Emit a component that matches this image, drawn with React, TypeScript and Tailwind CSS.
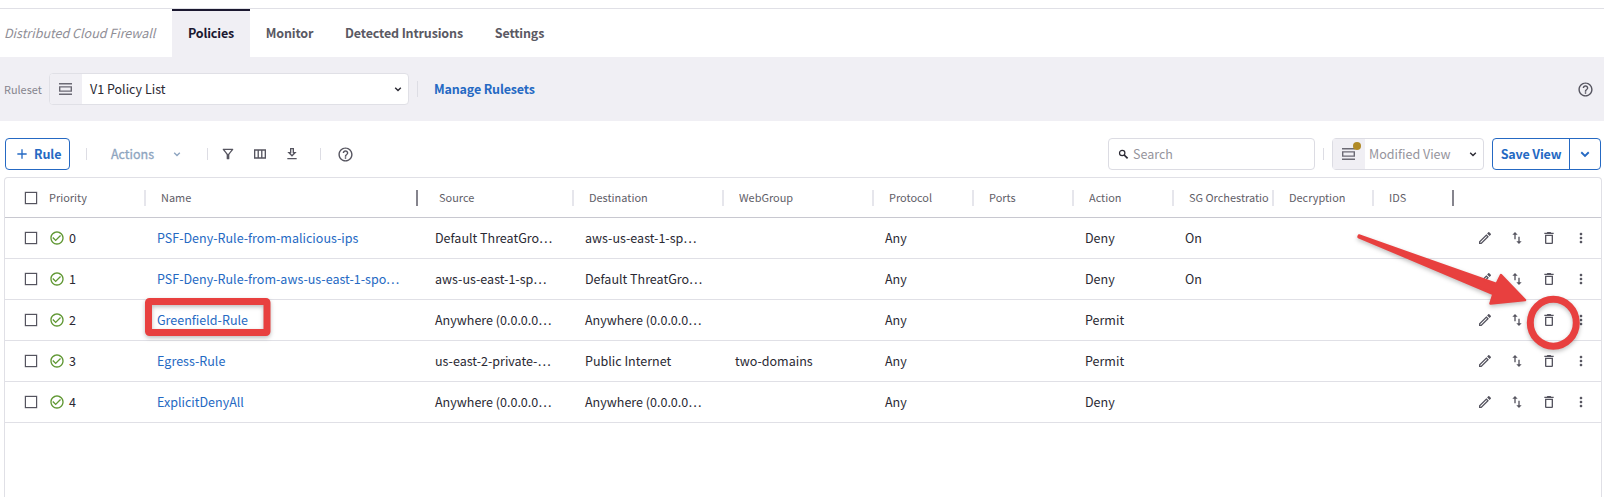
import { MdCheckCircleOutline, MdHelpOutline, MdMoreVert, MdOutlineDeleteOutline, MdOutlineEdit, MdOutlineFilterAlt, MdOutlineViewColumn, MdSwapVert, MdAdd } from 'react-icons/md';

type Rule = { name: string; source: string; destination: string; web?: string; action: string; sg?: string };

const rules: Rule[] = [
  { name: 'PSF-Deny-Rule-from-malicious-ips', source: 'Default ThreatGro…', destination: 'aws-us-east-1-sp…', action: 'Deny', sg: 'On' },
  { name: 'PSF-Deny-Rule-from-aws-us-east-1-spo…', source: 'aws-us-east-1-sp…', destination: 'Default ThreatGro…', action: 'Deny', sg: 'On' },
  { name: 'Greenfield-Rule', source: 'Anywhere (0.0.0.0…', destination: 'Anywhere (0.0.0.0…', action: 'Permit' },
  { name: 'Egress-Rule', source: 'us-east-2-private-…', destination: 'Public Internet', web: 'two-domains', action: 'Permit' },
  { name: 'ExplicitDenyAll', source: 'Anywhere (0.0.0.0…', destination: 'Anywhere (0.0.0.0…', action: 'Deny' },
];

const columns = [
  { label: 'Destination', width: 'w-[150px]' },
  { label: 'WebGroup', width: 'w-[150px]' },
  { label: 'Protocol', width: 'w-[100px]' },
  { label: 'Ports', width: 'w-[100px]' },
  { label: 'Action', width: 'w-[100px]' },
  { label: 'SG Orchestration', width: 'w-[100px]' },
  { label: 'Decryption', width: 'w-[100px]' },
];

function Divider({ className = '' }: { className?: string }) {
  return <span className={`w-px shrink-0 bg-[#dddde4] ${className}`} />;
}

function Handle({ dark = false }: { dark?: boolean }) {
  return <span className={`h-4 w-[2px] shrink-0 ${dark ? 'bg-[#85848d]' : 'bg-[#e6e6ec]'}`} />;
}

function Checkbox() {
  return <span className="h-3 w-3 shrink-0 border border-[#55545f] ring-[0.3px] ring-[#8a8992]" />;
}

function ListIcon() {
  return (
    <svg width="13" height="12" viewBox="0 0 13 12" fill="none" stroke="#6b6a74" strokeWidth="1.400">
      <path d="M0 .8H13M0 11.200H13M.7 3.900H12.300V8.100H.7Z" />
    </svg>
  );
}

function Chevron({ size = 12, className = '' }: { size?: number; className?: string }) {
  return (
    <svg width={size} height={size} viewBox="0 0 12 12" fill="none" stroke="currentColor" strokeWidth="1.400" className={`shrink-0 ${className}`}>
      <path d="M3.200 4.700L6 7.500L8.800 4.700" />
    </svg>
  );
}

function SearchIcon() {
  return (
    <svg width="13" height="13" viewBox="0 0 13 13" fill="none" stroke="#2a2933" className="shrink-0">
      <circle cx="5.200" cy="5" r="2.700" strokeWidth="1.200" />
      <path d="M7.200 7L10.600 10.400" strokeWidth="1.700" />
    </svg>
  );
}

function DownloadIcon() {
  return (
    <svg width="16" height="16" viewBox="0 0 24 24" fill="#55545f" className="ml-4 shrink-0">
      <path d="M19 9h-4V3H9v6H5l7 7 7-7zm-8 2V5h2v6h1.170L12 13.170 9.830 11H11zM5 18h14v2H5z" />
    </svg>
  );
}

function HeaderCell({ label, width, pad = 'pl-[15px]', dark }: { label: string; width: string; pad?: string; dark?: boolean }) {
  return (
    <div className={`flex shrink-0 items-center ${width} ${pad}`}>
      <span className="mr-[3px] min-w-0 flex-1 overflow-hidden whitespace-nowrap pb-[2px]">{label}</span>
      <Handle dark={dark} />
    </div>
  );
}

function Cell({ width, children, pad = 'pl-[11px]' }: { width: string; children?: string; pad?: string }) {
  return <div className={`shrink-0 whitespace-nowrap ${width} ${pad}`}>{children}</div>;
}

function Tab({ label, width }: { label: string; width: string }) {
  return <div className={`flex h-12 items-center justify-center text-[#5a5963] ${width}`}>{label}</div>;
}

export default function App() {
  return (
    <div className="relative flex h-[497px] w-[1604px] flex-col overflow-hidden bg-white font-['Noto_Sans_CJK_SC',sans-serif] text-[12.53px] leading-4 text-[#2a2933]">
      <div className="h-2 shrink-0" />
      <nav className="flex h-[49px] shrink-0 border-t border-[#e0e0e6] font-bold tracking-[-0.16px]">
        <div className="flex h-12 w-[172px] items-center whitespace-nowrap pl-1 font-normal italic tracking-normal text-[#8f8e96]">Distributed Cloud Firewall</div>
        <div className="flex h-12 w-[78px] items-center justify-center border-t-2 border-[#1b1830] bg-[#f0eff4] pb-[2px] text-[#1b1830]">Policies</div>
        <Tab label="Monitor" width="w-[79px]" />
        <Tab label="Detected Intrusions" width="w-[150px]" />
        <Tab label="Settings" width="w-[81px]" />
      </nav>

      <div className="flex h-16 shrink-0 items-center bg-[#f0eff4]">
        <span className="w-[49px] pl-1 text-[10.9px] text-[#85848d]">Ruleset</span>
        <div className="flex h-8 w-[360px] items-center overflow-hidden rounded border border-[#e0e0e6] bg-white">
          <div className="flex h-full w-8 items-center justify-center bg-[#f0eff4] pr-px"><ListIcon /></div>
          <span className="flex-1 pl-2">V1 Policy List</span>
          <Chevron className="mr-1" />
        </div>
        <Divider className="ml-2 h-4" />
        <span className="ml-4 flex-1 font-bold tracking-[-0.16px] text-[#2569c3]">Manage Rulesets</span>
        <MdHelpOutline size={17} color="#55545f" className="mr-[10px]" />
      </div>

      <div className="flex h-[56px] shrink-0 items-center pl-[5px] pt-[10px]">
        <button className="flex h-8 w-[65px] items-center rounded border border-[#2569c3] pl-2 font-bold tracking-[-0.1px] text-[#2569c3]">
          <MdAdd size={16} /><span className="ml-1">Rule</span>
        </button>
        <Divider className="ml-4 h-3" />
        <span className="ml-6 w-[60px] text-[#8ea5c0] [-webkit-text-stroke:0.3px_#8ea5c0]">Actions</span>
        <Chevron className="text-[#8ea5c0]" />
        <Divider className="ml-6 h-3" />
        <MdOutlineFilterAlt size={16} color="#55545f" className="ml-3" />
        <MdOutlineViewColumn size={16} color="#55545f" className="ml-4" />
        <DownloadIcon />
        <Divider className="ml-5 h-3" />
        <MdHelpOutline size={17} color="#55545f" className="ml-4" />
        <div className="ml-auto flex h-8 w-[207px] items-center rounded border border-[#dcdce3] pl-2 text-[#95949c]">
          <SearchIcon /><span className="ml-[3px]">Search</span>
        </div>
        <Divider className="ml-2 h-3" />
        <div className="relative ml-2 flex h-8 w-[152px] items-center rounded border border-[#dcdce3] text-[#95949c]">
          <div className="flex h-full w-8 items-center justify-center bg-[#f0eff4] pr-px"><ListIcon /></div>
          <span className="flex-1 pl-1">Modified View</span>
          <Chevron className="mr-1 text-[#2a2933]" />
          <span className="absolute left-5 top-[3px] h-2 w-2 rounded-full bg-[#b08a26]" />
        </div>
        <div className="ml-2 mr-[3px] flex h-8 w-[109px] items-center rounded border border-[#2569c3] font-bold tracking-[-0.16px] text-[#2569c3]">
          <span className="flex h-full w-[77px] items-center justify-center whitespace-nowrap border-r border-[#2569c3]">Save View</span>
          <span className="flex flex-1 justify-center"><Chevron size={16} /></span>
        </div>
      </div>

      <main className="ml-1 mr-[2px] flex-1 rounded-t border border-b-0 border-[#e0e0e6]">
        <div className="flex h-10 items-center border-b border-[#c8c8d0] text-[10.95px] text-[#5f5e68]">
          <div className="flex w-[141px] items-center pl-5">
            <Checkbox /><span className="ml-3 flex-1 pb-[2px]">Priority</span><Handle />
          </div>
          <HeaderCell label="Name" width="w-[272px]" dark />
          <HeaderCell label="Source" width="w-[156px]" pad="pl-[21px]" />
          {columns.map((c) => <HeaderCell key={c.label} {...c} />)}
          <HeaderCell label="IDS" width="w-[80px]" dark />
        </div>
        {rules.map((r, i) => (
          <div key={r.name} className="flex h-[41px] items-center border-b border-[#e0e0e6]">
            <div className="flex w-[141px] items-center pl-5">
              <Checkbox />
              <MdCheckCircleOutline size={16} color="#5f9732" className="ml-3" />
              <span className="ml-1">{i}</span>
            </div>
            <Cell width="w-[272px]"><a className="text-[#2569c3]">{r.name}</a></Cell>
            <Cell width="w-[156px]" pad="pl-[17px]">{r.source}</Cell>
            <Cell width="w-[150px]">{r.destination}</Cell>
            <Cell width="w-[150px]">{r.web}</Cell>
            <Cell width="w-[200px]">Any</Cell>
            <Cell width="w-[100px]">{r.action}</Cell>
            <Cell width="w-[100px]">{r.sg}</Cell>
            <div className="ml-auto mr-3 flex gap-4 text-[#55545f]">
              <MdOutlineEdit size={16} /><MdSwapVert size={16} /><MdOutlineDeleteOutline size={16} /><MdMoreVert size={16} />
            </div>
          </div>
        ))}
      </main>

      <svg className="pointer-events-none absolute inset-0 drop-shadow-[0_2px_2px_rgba(0,0,0,0.25)]" width="1604" height="497" fill="none">
        <rect x="148.500" y="301.500" width="118.500" height="31" rx="1" stroke="#e8403f" strokeWidth="7" />
        <ellipse cx="1553.300" cy="322.700" rx="23" ry="23.500" stroke="#e8403f" strokeWidth="7" />
        <path d="M1359 235.500L1496.500 284L1501 275L1525 300L1490.500 303.500L1493.500 294L1358.500 237Z" fill="#e8403f" stroke="#e8403f" strokeWidth="2.500" strokeLinejoin="round" />
      </svg>
    </div>
  );
}
